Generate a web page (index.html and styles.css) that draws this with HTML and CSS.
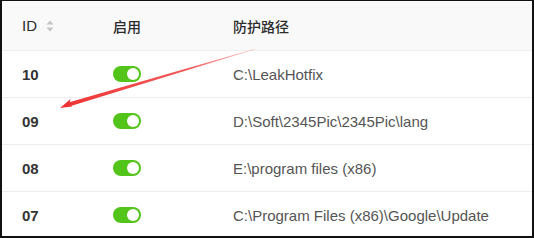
FILE: index.html
```html
<!DOCTYPE html>
<html>
<head>
<meta charset="utf-8">
<link rel="stylesheet" href="styles.css">
</head>
<body>
<div class="frame">
  <div class="table">
    <div class="row head">
      <div class="cell id-head">ID
        <span class="sorter">
          <svg width="8" height="12" viewBox="0 0 8 12"><path d="M4 0.5 L7.5 4.5 L0.5 4.5 Z" fill="#c4c4c4"/><path d="M4 11.5 L7.5 7.5 L0.5 7.5 Z" fill="#c4c4c4"/></svg>
        </span>
      </div>
      <div class="cell">启用</div>
      <div class="cell">防护路径</div>
    </div>
    <div class="row">
      <div class="cell id">10</div>
      <div class="cell"><span class="switch"><span class="knob"></span></span></div>
      <div class="cell path">C:\LeakHotfix</div>
    </div>
    <div class="row">
      <div class="cell id">09</div>
      <div class="cell"><span class="switch"><span class="knob"></span></span></div>
      <div class="cell path">D:\Soft\2345Pic\2345Pic\lang</div>
    </div>
    <div class="row">
      <div class="cell id">08</div>
      <div class="cell"><span class="switch"><span class="knob"></span></span></div>
      <div class="cell path">E:\program files (x86)</div>
    </div>
    <div class="row last">
      <div class="cell id">07</div>
      <div class="cell"><span class="switch"><span class="knob"></span></span></div>
      <div class="cell path">C:\Program Files (x86)\Google\Update</div>
    </div>
  </div>
  <svg class="arrow" width="534" height="238" viewBox="0 0 534 238">
    <defs>
      <linearGradient id="fade" x1="255" y1="49" x2="60" y2="108" gradientUnits="userSpaceOnUse">
        <stop offset="0" stop-color="#f24a4a" stop-opacity="0.3"/>
        <stop offset="0.35" stop-color="#f03c3c" stop-opacity="0.85"/>
        <stop offset="1" stop-color="#ee3333"/>
      </linearGradient>
    </defs>
    <polygon points="255,48.7 255.3,49.3 70,106.2 68.5,102.6" fill="url(#fade)"/>
    <polygon points="60,108 70.5,99 69.5,103 72,106.5" fill="#ee3333"/>
  </svg>
</div>
</body>
</html>
```
FILE: styles.css
```css
html, body {
  margin: 0;
  padding: 0;
  background: #fff;
}
.frame {
  position: relative;
  width: 534px;
  height: 238px;
  box-sizing: border-box;
  border-top: 1px solid #111;
  border-left: 2px solid #111;
  border-right: 2px solid #111;
  border-bottom: 2px solid #111;
  overflow: hidden;
  font-family: "Liberation Sans", "Noto Sans CJK SC", sans-serif;
  font-size: 14px;
}
.table {
  display: flex;
  flex-direction: column;
}
.row {
  display: grid;
  grid-template-columns: 111px 120px 1fr;
  height: 46px;
  border-bottom: 1px solid #eeeeee;
  align-items: center;
}
.row.last {
  border-bottom: none;
}
.row.head {
  height: 49px;
  background: #f9f9fa;
  border-bottom: 1px solid #efefef;
  color: #2b2b2b;
  font-weight: 500;
}
.cell:first-child {
  padding-left: 20px;
}
.id-head {
  display: flex;
  align-items: center;
  font-size: 15px;
}
.sorter {
  display: inline-flex;
  margin-left: 9px;
  margin-top: 1px;
}
.id {
  font-weight: bold;
  font-size: 15px;
  color: #333;
}
.path {
  color: #555;
  font-size: 15px;
}
.switch {
  display: flex;
  align-items: center;
  justify-content: flex-end;
  width: 28px;
  height: 16px;
  border-radius: 8px;
  background: #52c41a;
  box-sizing: border-box;
  padding-right: 2px;
}
.knob {
  width: 12px;
  height: 12px;
  border-radius: 50%;
  background: #fff;
}
.arrow {
  position: absolute;
  left: -2px;
  top: -1px;
  pointer-events: none;
}
```
